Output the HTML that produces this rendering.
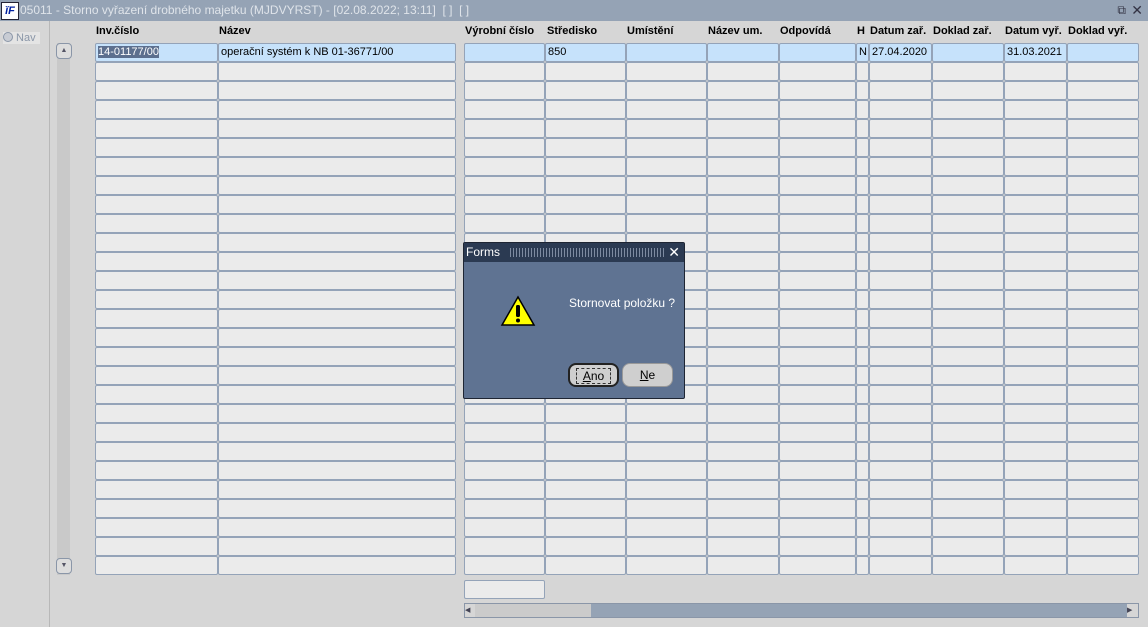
<!DOCTYPE html>
<html><head><meta charset="utf-8"><style>
body{margin:0;width:1148px;height:627px;background:#d6d6d6;font-family:"Liberation Sans",sans-serif;font-size:11px;position:relative;overflow:hidden}
.tb{position:absolute;left:0;top:0;width:1148px;height:21px;background:#95a3b5;color:#dfe4ea;font-size:12px;line-height:21px}
.logo{position:absolute;left:1px;top:2px;width:16px;height:16px;background:#fff;border:1px solid #223;color:#0020a0;font-weight:bold;font-style:italic;font-size:11px;line-height:16px;text-align:center}
.lp{position:absolute;left:0;top:21px;width:49px;height:606px;border-right:1px solid #b8b8b8;background:#d6d6d6}
.c{position:absolute;height:17px;border:1px solid #94a3b8;border-radius:2px;background:#ebebeb;box-sizing:border-box;line-height:17px;padding-left:2px;white-space:nowrap;overflow:hidden}
.s{background:#c6e2fb}
.h{position:absolute;top:25px;font-weight:bold;font-size:11px}
.dlg{position:absolute;left:463px;top:242px;width:222px;height:157px;background:#5f7392;border:1px solid #1e2533;box-sizing:border-box;border-radius:2px}
.dt{height:19px;background:#2b3a52;color:#fff;font-size:12px;line-height:19px;padding-left:2px;position:relative}
.btn{position:absolute;top:120px;height:24px;width:51px;background:#cfcfcf;border:1px solid #444;border-radius:8px;box-sizing:border-box;text-align:center;line-height:22px;font-size:12px}
</style></head><body>
<div class="tb"><div class="logo">ĭF</div><span style="position:absolute;left:20px">05011 - Storno vyřazení drobného majetku (MJDVYRST) - [02.08.2022; 13:11]&nbsp; [ ]&nbsp; [ ]</span>
<span style="position:absolute;right:22px;top:0;color:#334">⧉</span><span style="position:absolute;right:5px;top:0;color:#334;font-size:14px">✕</span></div>
<div class="lp"><div style="position:absolute;left:3px;top:11px;color:#8a96a8;font-size:11px;background:#e4e4e4;padding-right:4px"><span style="display:inline-block;width:8px;height:8px;border:1px solid #8a96a8;border-radius:50%;vertical-align:-1px;background:#c8ccd4"></span> Nav</div></div>
<div style="position:absolute;left:57px;top:43px;width:13px;height:532px;background:#c9c9c9"></div>
<div style="position:absolute;left:56px;top:43px;width:14px;height:14px;border:1px solid #8a96a8;border-radius:4px;background:#ddd;font-size:7px;text-align:center;line-height:13px;color:#556">▲</div>
<div style="position:absolute;left:56px;top:558px;width:14px;height:14px;border:1px solid #8a96a8;border-radius:4px;background:#ddd;font-size:7px;text-align:center;line-height:13px;color:#556">▼</div>
<div class="h" style="left:96px">Inv.číslo</div><div class="h" style="left:219px">Název</div>
<div class="h" style="left:465px">Výrobní číslo</div><div class="h" style="left:547px">Středisko</div><div class="h" style="left:627px">Umístění</div><div class="h" style="left:708px">Název um.</div><div class="h" style="left:780px">Odpovídá</div><div class="h" style="left:857px">H</div><div class="h" style="left:870px">Datum zař.</div><div class="h" style="left:933px">Doklad zař.</div><div class="h" style="left:1005px">Datum vyř.</div><div class="h" style="left:1068px">Doklad vyř.</div>
<div id="g"></div>
<div class="c" style="left:464px;top:580px;width:81px;height:19px"></div>
<div style="position:absolute;left:464px;top:603px;width:675px;height:15px;background:#95a3b5;border:1px solid #8a96a8;box-sizing:border-box"></div>
<div style="position:absolute;left:475px;top:604px;width:116px;height:13px;background:#cbcbcb"></div>
<div style="position:absolute;left:465px;top:604px;width:10px;height:13px;background:#d6d6d6;font-size:7px;line-height:13px;color:#445">◀</div>
<div style="position:absolute;left:1127px;top:604px;width:11px;height:13px;background:#d6d6d6;font-size:7px;line-height:13px;color:#445">▶</div>
<div class="dlg"><div class="dt">Forms<span style="position:absolute;left:46px;right:20px;top:5px;height:9px;background:repeating-linear-gradient(90deg,#7d8aa0 0 1px,transparent 1px 3px)"></span><span style="position:absolute;right:4px;top:0;font-size:14px">✕</span></div>
<svg style="position:absolute;left:36px;top:52px" width="36" height="32"><polygon points="18,2 34,30 2,30" fill="#ffff00" stroke="#000" stroke-width="1.5"/><rect x="16" y="10" width="4" height="12" rx="1.5"/><circle cx="18" cy="25.5" r="2"/></svg>
<div style="position:absolute;left:105px;top:53px;color:#fff;font-size:12px">Stornovat položku ?</div>
<div class="btn" style="left:104px;border:2px solid #222"><span style="border:1px dashed #333;padding:0 6px"><u>A</u>no</span></div>
<div class="btn" style="left:158px;border-color:#999"><u>N</u>e</div>
</div>
<script>
var cols=[[95,123],[218,238],[464,81],[545,81],[626,81],[707,72],[779,77],[856,13],[869,63],[932,72],[1004,63],[1067,72]];
var v={0:"14-01177/00",1:"operační systém k NB 01-36771/00",3:"850",7:"N",8:"27.04.2020",10:"31.03.2021"};
var h="";for(var r=0;r<28;r++){var y=43+r*19;for(var i=0;i<cols.length;i++){var t=r==0&&v[i]?v[i]:"";if(r==0&&i==0)t='<span style="background:#5c6f8e;color:#fff">'+t+'</span>';h+='<div class="c'+(r==0?' s':'')+'" style="left:'+cols[i][0]+'px;top:'+y+'px;width:'+cols[i][1]+'px;height:19px">'+t+'</div>';}}
document.getElementById('g').innerHTML=h;
</script>
</body></html>
